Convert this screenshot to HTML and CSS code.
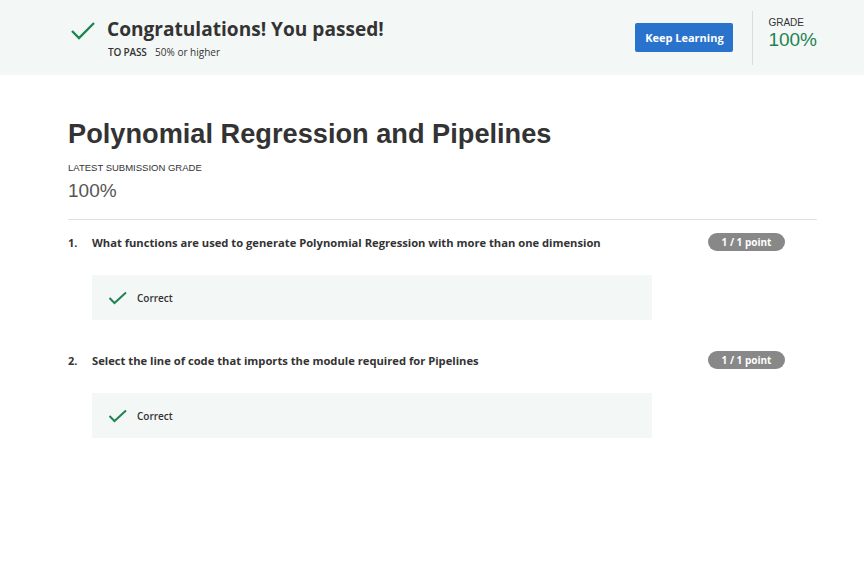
FILE: index.html
```html
<!DOCTYPE html>
<html>
<head>
<meta charset="utf-8">
<link rel="stylesheet" href="styles.css">
</head>
<body>
<header class="banner">
  <div class="banner-left">
    <svg class="check-big" width="26" height="20" viewBox="0 0 26 20"><path d="M2 10 L9 17 L24 2" fill="none" stroke="#1f8354" stroke-width="2.4"/></svg>
    <div class="banner-text">
      <h2 class="congrats">Congratulations! You passed!</h2>
      <div class="topass"><span class="topass-label">TO PASS</span> 50% or higher</div>
    </div>
  </div>
  <div class="banner-right">
    <button class="keep">Keep Learning</button>
    <div class="grade-box">
      <div class="grade-label">GRADE</div>
      <div class="grade-value">100%</div>
    </div>
  </div>
</header>
<main class="content">
  <h1 class="title">Polynomial Regression and Pipelines</h1>
  <div class="latest-label">LATEST SUBMISSION GRADE</div>
  <div class="latest-value">100%</div>
  <hr class="rule">
  <section class="question">
    <div class="q-head">
      <span class="q-num">1.</span>
      <span class="q-text">What functions are used to generate Polynomial Regression with more than one dimension</span>
      <span class="badge">1 / 1 point</span>
    </div>
    <div class="result">
      <svg class="check-small" width="20" height="14" viewBox="0 0 20 14"><path d="M1.5 7 L6.5 12 L18 1.5" fill="none" stroke="#1f8354" stroke-width="2"/></svg>
      <span>Correct</span>
    </div>
  </section>
  <section class="question">
    <div class="q-head">
      <span class="q-num">2.</span>
      <span class="q-text">Select the line of code that imports the module required for Pipelines</span>
      <span class="badge">1 / 1 point</span>
    </div>
    <div class="result">
      <svg class="check-small" width="20" height="14" viewBox="0 0 20 14"><path d="M1.5 7 L6.5 12 L18 1.5" fill="none" stroke="#1f8354" stroke-width="2"/></svg>
      <span>Correct</span>
    </div>
  </section>
</main>
</body>
</html>
```
FILE: styles.css
```css
* { box-sizing: border-box; }
body { margin: 0; background: #fff; font-family: "Open Sans", sans-serif; color: #333; }
.banner { height: 75px; background: #f3f8f6; display: flex; justify-content: space-between; align-items: center; padding: 0 47px 0 70px; }
.banner-left { display: flex; align-items: flex-start; }
.check-big { margin-top: 4px; margin-right: 11px; }
.congrats { margin: 0; font-size: 19.1px; font-weight: 700; line-height: 24px; color: #333; }
.topass { font-size: 10px; margin-top: 4px; margin-left: 1px; color: #333; }
.topass-label { font-weight: 600; margin-right: 6px; letter-spacing: -0.2px; }
.banner-right { display: flex; align-items: center; height: 100%; }
.keep { background: #2a73cc; color: #fff; border: none; font-family: "Open Sans", sans-serif; font-weight: 700; font-size: 11px; width: 98px; height: 29px; border-radius: 2px; padding: 0; }
.grade-box { margin-left: 19px; border-left: 1px solid #dcdcdc; height: 54px; padding-left: 15px; padding-top: 6px; font-family: "Liberation Sans", Arial, sans-serif; }
.grade-label { font-size: 10px; color: #333; }
.grade-value { font-size: 19px; color: #1f8354; margin-top: 1px; }
.content { padding: 0 47px 0 68px; }
.title { font-family: "Liberation Sans", Arial, sans-serif; font-size: 27.2px; font-weight: 700; margin: 43px 0 0; line-height: 32px; color: #333; }
.latest-label { font-family: "Liberation Sans", Arial, sans-serif; font-size: 9.5px; margin-top: 12px; color: #333; }
.latest-value { font-family: "Liberation Sans", Arial, sans-serif; font-size: 19px; color: #555; margin-top: 7px; }
.rule { border: none; border-top: 1px solid #e1e1e1; margin: 17px 0 0; }
.question { padding-top: 13px; padding-bottom: 18px; }
.q-head { display: flex; align-items: center; height: 18px; }
.q-num { width: 24px; font-size: 11px; font-weight: 700; }
.q-text { flex: 1; font-size: 11.2px; font-weight: 700; }
.badge { background: #888; color: #fff; font-size: 10px; font-weight: 700; width: 77px; height: 18px; border-radius: 9px; display: flex; align-items: center; justify-content: center; margin-right: 32px; }
.result { margin: 24px 0 0 24px; width: 560px; height: 45px; background: #f3f8f6; display: flex; align-items: center; padding-left: 16px; font-size: 10px; font-weight: 600; }
.check-small { margin-right: 9px; }
```
